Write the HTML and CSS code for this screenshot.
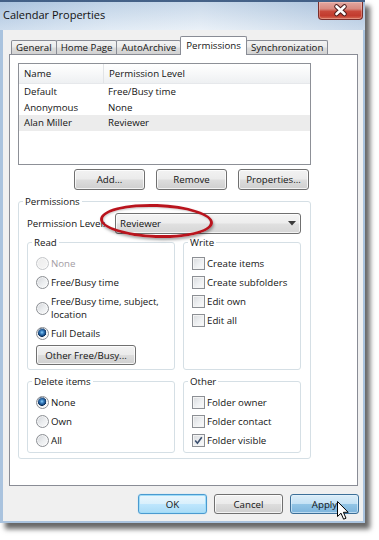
FILE: index.html
```html
<!DOCTYPE html>
<html>
<head>
<meta charset="utf-8">
<title>Calendar Properties</title>
<link rel="stylesheet" href="styles.css">
</head>
<body>
<div class="screen">
  <div class="window">
    <div class="titlebar">
      <span class="title">Calendar Properties</span>
      <div class="close">
        <svg width="43" height="17" viewBox="0 0 43 17">
          <path d="M17.5 4.5 L25.5 12 M25.5 4.5 L17.5 12" stroke="#4a1a1a" stroke-width="4.6" stroke-linecap="round"/>
          <path d="M17.5 4.5 L25.5 12 M25.5 4.5 L17.5 12" stroke="#ffffff" stroke-width="2.6" stroke-linecap="round"/>
        </svg>
      </div>
    </div>
    <div class="client">
      <div class="tabs">
        <div class="tab">General</div>
        <div class="tab">Home Page</div>
        <div class="tab">AutoArchive</div>
        <div class="tab active">Permissions</div>
        <div class="tab">Synchronization</div>
      </div>
      <div class="panel">
        <div class="listbox">
          <div class="lrow head"><span class="c1">Name</span><span class="c2">Permission Level</span></div>
          <div class="lrow"><span class="c1">Default</span><span class="c2">Free/Busy time</span></div>
          <div class="lrow"><span class="c1">Anonymous</span><span class="c2">None</span></div>
          <div class="lrow sel"><span class="c1">Alan Miller</span><span class="c2">Reviewer</span></div>
        </div>
        <div class="btnrow">
          <button class="btn">Add...</button>
          <button class="btn">Remove</button>
          <button class="btn">Properties...</button>
        </div>
        <fieldset class="group perms">
          <legend>Permissions</legend>
          <div class="levelrow">
            <span class="lbl">Permission Level:</span>
            <div class="select">
              <span>Reviewer</span>
              <svg width="8" height="5" viewBox="0 0 8 5"><path d="M0 0 H8 L4 4.5 Z" fill="#3a3a3a"/></svg>
            </div>
          </div>
          <div class="subgrid">
            <fieldset class="group sub">
              <legend>Read</legend>
              <div class="opt disabled"><span class="radio"></span><span>None</span></div>
              <div class="opt"><span class="radio"></span><span>Free/Busy time</span></div>
              <div class="opt two"><span class="radio"></span><span>Free/Busy time, subject, location</span></div>
              <div class="opt"><span class="radio on"></span><span>Full Details</span></div>
              <button class="btn wide">Other Free/Busy...</button>
            </fieldset>
            <fieldset class="group sub">
              <legend>Write</legend>
              <div class="opt"><span class="check"></span><span>Create items</span></div>
              <div class="opt"><span class="check"></span><span>Create subfolders</span></div>
              <div class="opt"><span class="check"></span><span>Edit own</span></div>
              <div class="opt"><span class="check"></span><span>Edit all</span></div>
            </fieldset>
            <fieldset class="group sub short">
              <legend>Delete items</legend>
              <div class="opt"><span class="radio on"></span><span>None</span></div>
              <div class="opt"><span class="radio"></span><span>Own</span></div>
              <div class="opt"><span class="radio"></span><span>All</span></div>
            </fieldset>
            <fieldset class="group sub short">
              <legend>Other</legend>
              <div class="opt"><span class="check"></span><span>Folder owner</span></div>
              <div class="opt"><span class="check"></span><span>Folder contact</span></div>
              <div class="opt"><span class="check">
                <svg width="11" height="11" viewBox="0 0 11 11"><path d="M2.2 5.6 L4.4 8.3 L8.8 2.2" fill="none" stroke="#3b4f6e" stroke-width="1.6"/></svg>
              </span><span>Folder visible</span></div>
            </fieldset>
          </div>
        </fieldset>
      </div>
      <div class="footer">
        <button class="btn dlg ok">OK</button>
        <button class="btn dlg">Cancel</button>
        <button class="btn dlg hot">Apply</button>
      </div>
    </div>
  </div>
  <div class="ellipse"></div>
  <svg class="cursor" width="13" height="20" viewBox="0 0 13 20">
    <path d="M0.5 0.5 L0.5 15.5 L4 12.2 L6.6 18.2 L9 17.2 L6.4 11.3 L11.2 11.3 Z" fill="#ffffff" stroke="#000000" stroke-width="1" stroke-linejoin="round"/>
  </svg>
</div>
</body>
</html>
```

FILE: styles.css
```css
* { box-sizing: border-box; }
html, body { margin: 0; padding: 0; background: #ffffff; }
body {
  font-family: "Open Sans", "Noto Sans", sans-serif;
  font-size: 9.7px;
  color: #141414;
}
.screen {
  width: 379px;
  height: 540px;
  overflow: hidden;
  position: relative;
}
.window {
  width: 365px;
  box-shadow: 5px 6px 5px rgba(0, 0, 0, 0.6);
}
.titlebar {
  height: 30px;
  display: flex;
  justify-content: space-between;
  align-items: flex-start;
  background:
    linear-gradient(to bottom, rgba(55, 85, 125, 0.9) 0, rgba(55, 85, 125, 0.9) 2px, rgba(0, 0, 0, 0) 2px),
    linear-gradient(to bottom, rgba(120, 155, 195, 0.25) 0, rgba(255, 255, 255, 0.3) 100%),
    linear-gradient(to right, #b7cde5 0%, #d5e3f1 30%, #e1ebf5 55%, #c9d9ea 80%, #b3c9e2 100%);
}
.title {
  font-size: 11px;
  line-height: 30px;
  padding-left: 3px;
  color: #111111;
}
.close {
  width: 45px;
  height: 18px;
  margin: 2px 2px 0 0;
  border: 1px solid #7a2e2a;
  border-top: none;
  border-radius: 0 0 4px 4px;
  background: linear-gradient(to bottom, #e3a7a0 0%, #d88a80 40%, #c8483a 55%, #c23b2e 80%, #d66b55 100%);
  box-shadow: inset 0 0 0 1px rgba(255, 220, 210, 0.35);
}
.close svg { display: block; }
.client {
  background: #f0f0f0;
  border-style: solid;
  border-color: #aac3de;
  border-width: 0 2px 2px 3px;
  padding: 6px 5px 7px 6px;
}
.tabs {
  display: flex;
  align-items: flex-end;
  height: 18px;
  padding-left: 2px;
}
.tab {
  height: 14px;
  line-height: 13px;
  padding: 0 4px;
  border: 1px solid #898c95;
  border-bottom: none;
  margin-left: -1px;
  background: linear-gradient(to bottom, #f3f3f3 0%, #ebebeb 45%, #dcdcdc 55%, #d2d2d2 100%);
  border-radius: 2px 2px 0 0;
  white-space: nowrap;
}
.tab:first-child { margin-left: 0; }
.tab.active {
  height: 19px;
  line-height: 17px;
  padding: 0 5px;
  margin-bottom: -1px;
  background: #ffffff;
  position: relative;
  z-index: 1;
}
.panel {
  height: 432px;
  background: #ffffff;
  border: 1px solid #898c95;
  padding: 8px 8px 8px 8px;
}
.listbox {
  width: 293px;
  height: 102px;
  border: 1px solid #8d9097;
  background: #ffffff;
}
.lrow {
  display: flex;
  height: 16px;
  line-height: 16px;
  white-space: nowrap;
}
.lrow .c1 { width: 84px; padding-left: 5px; }
.lrow .c2 { padding-left: 5px; }
.lrow.head {
  height: 20px;
  line-height: 20px;
  background: linear-gradient(to bottom, #ffffff 0%, #f7f8f9 50%, #eef0f2 100%);
  border-bottom: 1px solid #e6e8eb;
}
.lrow.head .c2 { border-left: 1px solid #e2e4e7; flex: 1; }
.lrow.sel { background: #ececec; margin-top: -1px; }
.btnrow {
  display: flex;
  justify-content: flex-end;
  gap: 11px;
  width: 293px;
  padding-right: 2px;
  margin-top: 4px;
}
.btn {
  font: inherit;
  color: inherit;
  width: 71px;
  height: 21px;
  padding: 0;
  border: 1px solid #707070;
  border-radius: 3px;
  background: linear-gradient(to bottom, #f2f2f2 0%, #ebebeb 48%, #dddddd 52%, #cfcfcf 100%);
  box-shadow: inset 0 0 0 1px rgba(255, 255, 255, 0.75);
}
fieldset.group {
  margin: 0;
  min-width: 0;
  border: 1px solid #d5dfe5;
  border-radius: 3px;
}
fieldset.group legend {
  padding: 0 2px;
  margin-left: -4px;
  line-height: 15px;
}
.perms {
  width: 293px;
  margin-top: 4px !important;
  padding: 0 9px 5px 8px;
}
.levelrow {
  display: flex;
  align-items: center;
  margin-top: 4px;
}
.lbl { width: 88px; white-space: nowrap; }
.select {
  width: 186px;
  height: 21px;
  display: flex;
  align-items: center;
  justify-content: space-between;
  padding: 0 4px 0 4px;
  border: 1px solid #707070;
  border-radius: 3px;
  background: linear-gradient(to bottom, #f4f4f4 0%, #ededed 48%, #e0e0e0 52%, #d6d6d6 100%);
  box-shadow: inset 0 0 0 1px rgba(255, 255, 255, 0.7);
}
.subgrid {
  display: grid;
  grid-template-columns: 148px 118px;
  column-gap: 8px;
  row-gap: 4px;
  margin-top: 1px;
}
fieldset.sub { padding: 4px 6px 4px 8px; }
fieldset.sub.short { padding-bottom: 2px; }
.opt {
  display: flex;
  align-items: center;
  height: 19px;
  line-height: 13px;
}
.opt.two { height: 32px; }
.opt.disabled { color: #a39ca3; }
.radio {
  flex: none;
  width: 13px;
  height: 13px;
  margin-right: 2px;
  border-radius: 50%;
  border: 1px solid #8c8f94;
  background: linear-gradient(135deg, #d2d4d8 0%, #eceef0 55%, #fbfbfb 100%);
  box-shadow: inset 0 0 0 1px rgba(255, 255, 255, 0.6);
}
.opt.disabled .radio {
  border-color: #c4c6c9;
  background: linear-gradient(135deg, #ececec 0%, #f6f6f6 100%);
}
.radio.on {
  background:
    radial-gradient(circle at 45% 40%, #8fd2f7 0, #3f86c7 1.6px, #164a83 3.4px, #0e2f57 4.2px, rgba(0, 0, 0, 0) 4.6px),
    linear-gradient(135deg, #d2d4d8 0%, #eceef0 55%, #fbfbfb 100%);
}
.check {
  flex: none;
  width: 13px;
  height: 13px;
  margin-right: 2px;
  border: 1px solid #8c8f94;
  background: linear-gradient(135deg, #d8dadd 0%, #eef0f2 55%, #fbfbfb 100%);
  box-shadow: inset 0 0 0 1px #f4f4f4;
  display: flex;
  align-items: center;
  justify-content: center;
}
.check svg { display: block; }
.btn.wide {
  width: 100px;
  height: 20px;
  margin-top: 2px;
}
.footer {
  display: flex;
  justify-content: flex-end;
  gap: 7px;
  margin-top: 8px;
  margin-right: -1px;
}
.btn.dlg { width: 69px; height: 20px; }
.btn.ok {
  border-color: #4a9ad0;
  background: linear-gradient(to bottom, #eaf6fd 0%, #d9f0fc 48%, #bee6fd 52%, #a9dbf6 100%);
  box-shadow: inset 0 0 0 1px #9fdcf8, 0 0 1px #7ec8ee;
}
.btn.hot {
  border-color: #3c6f98;
  background: linear-gradient(to bottom, #dcedf8 0%, #c4e2f5 48%, #92c5e6 52%, #7cb4dc 100%);
  box-shadow: inset 0 0 0 1px rgba(230, 245, 255, 0.6);
}
.ellipse {
  position: absolute;
  left: 100px;
  top: 204px;
  width: 113px;
  height: 34px;
  border: 3px solid #b9141d;
  border-radius: 50%;
  box-shadow: 1px 2px 3px rgba(0, 0, 0, 0.35), inset 1px 1px 2px rgba(0, 0, 0, 0.2);
  transform: rotate(2deg);
}
.cursor {
  position: absolute;
  left: 337px;
  top: 501px;
}
```
